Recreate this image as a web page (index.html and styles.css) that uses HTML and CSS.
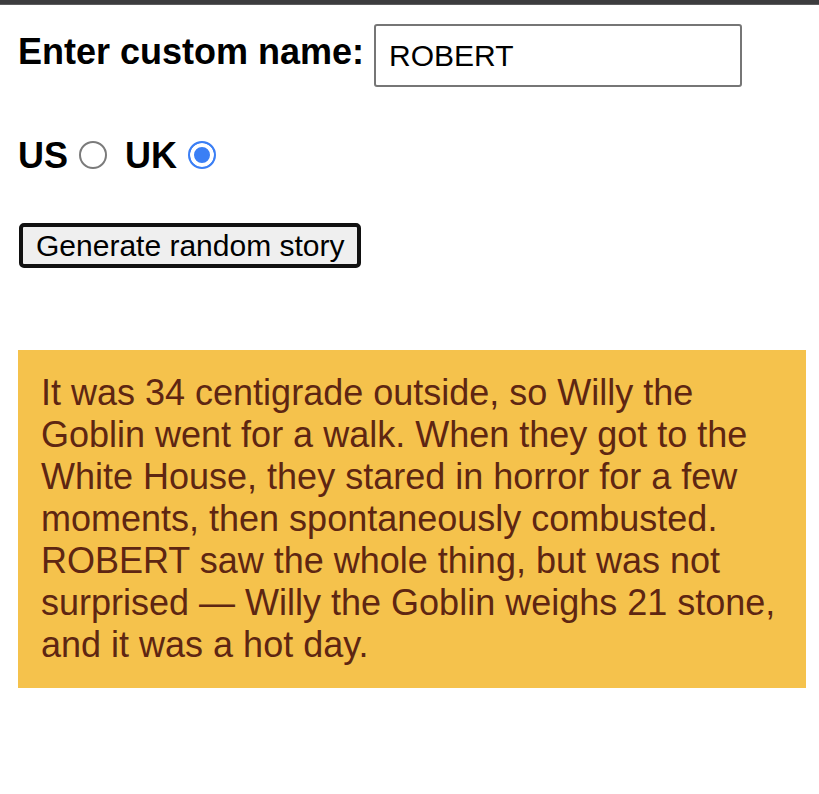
FILE: index.html
```html
<!DOCTYPE html>
<html lang="en">
<head>
<meta charset="utf-8">
<title>Silly story generator</title>
<link rel="stylesheet" href="styles.css">
</head>
<body>
<div class="topbar"></div>
<main class="page">
  <div class="row row-name">
    <label class="lbl lbl-name" for="customname">Enter custom name:</label>
    <input class="name-input" id="customname" type="text" value="ROBERT">
  </div>
  <div class="row row-radio">
    <label class="lbl" for="us">US</label>
    <input class="radio" id="us" type="radio" name="ukus" value="us">
    <label class="lbl" for="uk">UK</label>
    <input class="radio" id="uk" type="radio" name="ukus" value="uk" checked>
  </div>
  <div class="row row-btn">
    <button class="randomize" type="button">Generate random story</button>
  </div>
  <p class="story">It was 34 centigrade outside, so Willy the Goblin went for a walk. When they got to the White House, they stared in horror for a few moments, then spontaneously combusted. ROBERT saw the whole thing, but was not surprised — Willy the Goblin weighs 21 stone, and it was a hot day.</p>
</main>
</body>
</html>
```
FILE: styles.css
```css
html, body {
  margin: 0;
  padding: 0;
  background: #ffffff;
}

body {
  font-family: "Liberation Sans", Arial, Helvetica, sans-serif;
  color: #000;
}

.topbar {
  height: 4px;
  background: #3c3c3e;
  border-bottom: 1px solid #5c5c5e;
}

.page {
  width: 788px;
  padding: 19px 13px 0 18px;
}

.row {
  display: flex;
  align-items: flex-start;
}

.lbl {
  font-weight: bold;
  font-size: 36px;
  line-height: 41px;
}

.lbl-name {
  margin-top: 7px;
  margin-right: 10px;
}

.name-input {
  box-sizing: border-box;
  width: 368px;
  height: 63px;
  margin: 0;
  padding: 1px 13px 0;
  border: 2px solid #767676;
  border-radius: 3px;
  font-family: "Liberation Sans", Arial, sans-serif;
  font-size: 30px;
  color: #000;
  background: #fff;
  outline: none;
}

.row-radio {
  margin-top: 48px;
}

.radio {
  -webkit-appearance: none;
  appearance: none;
  box-sizing: border-box;
  width: 28px;
  height: 28px;
  margin: 6px 18px 0 11px;
  border: 2px solid #7b7b7b;
  border-radius: 50%;
  background: #fff;
  flex: none;
}

.radio:checked {
  border-color: #3b7ff5;
  background: #3b7ff5;
  box-shadow: inset 0 0 0 4px #fff;
}

.row-btn {
  margin-top: 47px;
  padding-left: 1px;
}

.randomize {
  box-sizing: border-box;
  height: 45px;
  margin: 0;
  padding: 0 13px;
  border: 4px solid #111;
  border-radius: 5px;
  background: #efefef;
  font-family: "Liberation Sans", Arial, sans-serif;
  font-size: 30px;
  line-height: 34px;
  color: #000;
}

.story {
  margin: 82px 0 0 0;
  padding: 22px 23px;
  background: #f5c24c;
  color: #5e2612;
  font-size: 36px;
  line-height: 42px;
}
```
